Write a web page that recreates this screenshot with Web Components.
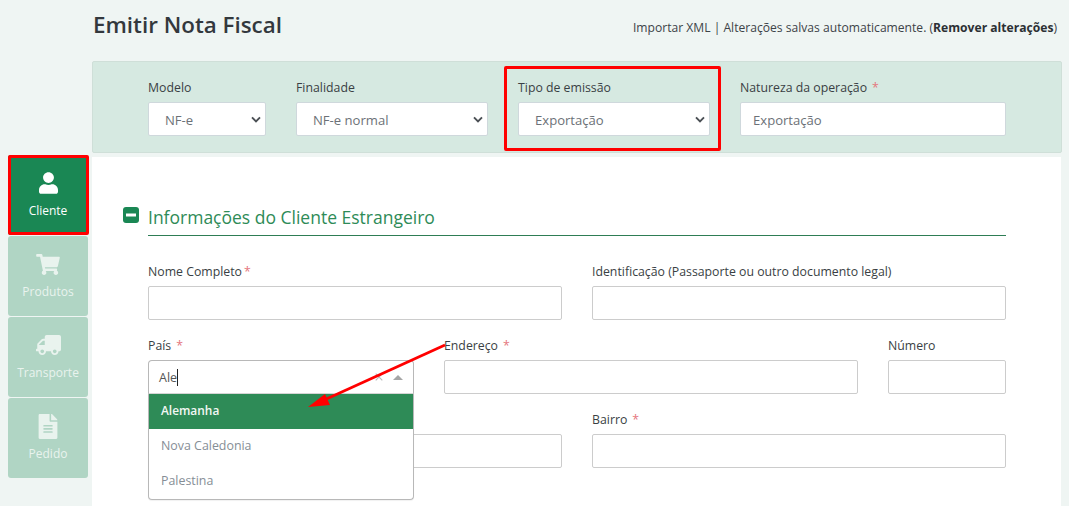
<!DOCTYPE html>
<html lang="pt-BR">
<head>
<meta charset="utf-8">
<title>Emitir Nota Fiscal</title>
<style>
  html, body { margin: 0; height: 506px; overflow: hidden; background: #eff5f3; }
  body { font-family: "Open Sans", "Noto Sans", sans-serif; font-size: 13px; color: #333; }
</style>
</head>
<body>
<nfe-app></nfe-app>

<script>
// Form field: label + a box (input look, select look, or whatever is slotted)
class NfeField extends HTMLElement {
  constructor() {
    super();
    let shadow = this.attachShadow({mode: 'open'});
    let req = this.hasAttribute('required');
    let gap = this.getAttribute('gap') || '5px';
    let value = this.getAttribute('value') || '';
    let isSelect = this.getAttribute('type') === 'select';
    let chevron = isSelect ?
      '<svg class="chev" width="10" height="7" viewBox="0 0 10 7"><path d="M1 1.4 5 5.4l4-4" fill="none" stroke="#4a4f54" stroke-width="1.9"/></svg>' : '';
    shadow.innerHTML =
    '<style>\
      :host { display: block; width: var(--w, 100%); position: relative; flex: none; }\
      .lbl { display: block; height: 24px; line-height: 20px; font-size: 12.3px; color: #3a3f44; white-space: nowrap; }\
      .req { color: #e5767d; margin-left: ' + gap + '; }\
      .box { box-sizing: border-box; height: 34px; background: #fff; border: 1px solid #ccc; border-radius: 2px;\
             display: flex; align-items: center; justify-content: space-between;\
             padding: 1px 4px 0 ' + (isSelect ? '16px' : '12px') + '; font-size: 13.1px; color: #6c7177; }\
      :host([tone="bar"]) .box { border-color: #cfd8dc; }\
      :host([marked]) .mark { position: absolute; left: -14px; right: -11px; top: -12px; bottom: -15px;\
             border: 3px solid #f00; border-radius: 2px; pointer-events: none; }\
    </style>\
    <span class="lbl">' + this.getAttribute('label') + (req ? '<span class="req">*</span>' : '') + '</span>\
    <slot><div class="box"><span>' + value + '</span>' + chevron + '</div></slot>\
    <div class="mark"></div>';
  }
}
customElements.define('nfe-field', NfeField);

// Autocomplete for the country, open with the options over the next row
class NfeCombo extends HTMLElement {
  constructor() {
    super();
    let shadow = this.attachShadow({mode: 'open'});
    shadow.innerHTML =
    '<style>\
      :host { display: block; position: relative; height: 34px; font-size: 12.4px; }\
      .box { box-sizing: border-box; height: 34px; background: #fff; border: 1px solid #b8b8b8; border-bottom-color: #d5d5d5;\
             border-radius: 4px 4px 0 0; display: flex; align-items: center; padding: 0 10px 0 10px; color: #555; }\
      .val { flex: 1; font-size: 12.5px; }\
      .cursor { display: inline-block; width: 1px; height: 17px; background: #222; vertical-align: -4px; }\
      .x { margin-right: 10px; }\
      .list { position: absolute; z-index: 2; top: 34px; left: 0; right: 0; box-sizing: border-box; background: #fff;\
              border: 1px solid #b8b8b8; border-top: 0; border-radius: 0 0 4px 4px; box-shadow: 0 1px 1px rgba(0,0,0,.06); }\
      .opt { height: 35px; line-height: 33px; padding-left: 12px; color: #868e96; }\
      .opt.on { background: #2e8b57; color: #f2f7f4; font-weight: 600; font-size: 11.9px; }\
    </style>\
    <div class="box">\
      <span class="val">Ale<span class="cursor"></span></span>\
      <svg class="x" width="8" height="8" viewBox="0 0 8 8"><path d="M.7.7l6.6 6.6M7.3.7.7 7.3" stroke="#bbb" stroke-width="1.2"/></svg>\
      <svg width="10" height="5" viewBox="0 0 10 5"><path d="M5 0l5 5H0z" fill="#a6a6a6"/></svg>\
    </div>\
    <div class="list">\
      <div class="opt on">Alemanha</div>\
      <div class="opt">Nova Caledonia</div>\
      <div class="opt">Palestina</div>\
    </div>';
  }
}
customElements.define('nfe-combo', NfeCombo);

// Side menu tile: slotted svg icon + text
class NfeTile extends HTMLElement {
  constructor() {
    super();
    let shadow = this.attachShadow({mode: 'open'});
    shadow.innerHTML =
    '<style>\
      :host { display: flex; flex-direction: column; align-items: center; box-sizing: border-box; position: relative;\
              width: 80px; height: 80px; border-radius: 3px; background: #b0d5c4; color: #e9f3ee; font-size: 12px; }\
      :host([active]) { background: #1a8754; color: #fff; }\
      .icon { height: 30px; margin-top: 13px; display: flex; align-items: center; justify-content: center; }\
      .txt { margin-top: 4px; line-height: 18px; }\
      :host([active]) .mark { position: absolute; left: 0; right: -1px; top: 0; bottom: 0;\
              border: 3px solid #f00; border-radius: 2px; }\
    </style>\
    <div class="icon"><slot name="icon"></slot></div>\
    <div class="txt"><slot></slot></div>\
    <div class="mark"></div>';
  }
}
customElements.define('nfe-tile', NfeTile);

// Page: side menu, header line, top bar and the client card
class NfeApp extends HTMLElement {
  constructor() {
    super();
    let shadow = this.attachShadow({mode: 'open'});
    shadow.innerHTML =
    '<style>\
      :host { display: flex; position: relative; width: 1069px; height: 506px; overflow: hidden; }\
      nav { width: 80px; padding: 155px 4px 0 8px; display: flex; flex-direction: column; gap: 1px; flex: none; }\
      main { width: 970px; flex: none; }\
      header { height: 61px; display: flex; justify-content: space-between; align-items: center; box-sizing: border-box; padding: 0 5px 12px 1px; }\
      h1 { margin: 0; font-size: 22.4px; font-weight: 600; color: #33383d; line-height: 30px; }\
      .tools { font-size: 12.12px; color: #3d4348; padding-top: 6px; }\
      .tools b { color: #2c3034; }\
      .bar { box-sizing: border-box; height: 92px; background: #d6e9e1; border: 1px solid #cfdfd8; border-radius: 2px;\
             padding: 16px 0 0 55px; display: flex; align-items: flex-start; gap: 30px; }\
      .card { width: 969px; height: 360px; margin-top: 4px; background: #fff; box-sizing: border-box; padding: 48px 55px 0 56px; position: relative; }\
      h2 { margin: 0 0 26px; height: 30px; line-height: 24px; font-size: 17.5px; font-weight: 500; color: #2e8b57; border-bottom: 1px solid #2e7d55; position: relative; }\
      h2 svg { position: absolute; left: -25px; top: 2px; }\
      .row { display: flex; gap: 30px; margin-bottom: 16px; }\
      .arrow { position: absolute; left: 0; top: 0; z-index: 5; pointer-events: none; }\
    </style>\
    <nav>\
      <nfe-tile active><svg slot="icon" width="19" height="22" viewBox="0 0 448 512"><path fill="#fff" d="M224 256c70.7 0 128-57.3 128-128S294.7 0 224 0 96 57.3 96 128s57.3 128 128 128zm89.6 32h-16.7c-22.2 10.2-46.9 16-72.9 16s-50.6-5.8-72.9-16h-16.7C60.2 288 0 348.2 0 422.4V464c0 26.5 21.5 48 48 48h352c26.5 0 48-21.5 48-48v-41.6c0-74.2-60.2-134.4-134.4-134.4z"/></svg>Cliente</nfe-tile>\
      <nfe-tile><svg slot="icon" width="24" height="21" viewBox="0 0 576 512"><path fill="#e9f3ee" d="M528.12 301.319l47.273-208C578.806 78.301 567.391 64 551.99 64H159.208l-9.166-44.81C147.758 8.021 137.93 0 126.529 0H24C10.745 0 0 10.745 0 24v16c0 13.255 10.745 24 24 24h69.883l70.248 343.435C147.325 417.1 136 435.222 136 456c0 30.928 25.072 56 56 56s56-25.072 56-56c0-15.674-6.447-29.835-16.824-40h209.647C430.447 426.165 424 440.326 424 456c0 30.928 25.072 56 56 56s56-25.072 56-56c0-22.172-12.888-41.332-31.579-50.405l5.517-24.276c3.413-15.018-8.002-29.319-23.403-29.319H218.117l-6.545-32h293.145c11.206 0 20.92-7.754 23.403-18.681z"/></svg>Produtos</nfe-tile>\
      <nfe-tile><svg slot="icon" width="25" height="20" viewBox="0 0 640 512"><path fill="#e9f3ee" transform="matrix(-1 0 0 1 640 0)" d="M624 352h-16V243.9c0-12.7-5.1-24.9-14.1-33.9L494 110.1c-9-9-21.2-14.1-33.9-14.1H416V48c0-26.5-21.5-48-48-48H48C21.5 0 0 21.5 0 48v320c0 26.5 21.5 48 48 48h16c0 53 43 96 96 96s96-43 96-96h128c0 53 43 96 96 96s96-43 96-96h48c8.8 0 16-7.2 16-16v-32c0-8.8-7.2-16-16-16zM160 464c-26.5 0-48-21.5-48-48s21.5-48 48-48 48 21.5 48 48-21.5 48-48 48zm320 0c-26.5 0-48-21.5-48-48s21.5-48 48-48 48 21.5 48 48-21.5 48-48 48zm80-208H416V144h44.1l99.9 99.9V256z"/></svg>Transporte</nfe-tile>\
      <nfe-tile><svg slot="icon" width="22" height="25" viewBox="0 0 384 512"><path fill="#e9f3ee" d="M224 136V0H24C10.7 0 0 10.7 0 24v464c0 13.3 10.7 24 24 24h336c13.3 0 24-10.7 24-24V160H248c-13.2 0-24-10.8-24-24zm64 236c0 6.6-5.4 12-12 12H108c-6.6 0-12-5.4-12-12v-8c0-6.6 5.4-12 12-12h168c6.6 0 12 5.4 12 12v8zm0-64c0 6.6-5.4 12-12 12H108c-6.6 0-12-5.4-12-12v-8c0-6.6 5.4-12 12-12h168c6.6 0 12 5.4 12 12v8zm0-72v8c0 6.6-5.4 12-12 12H108c-6.6 0-12-5.4-12-12v-8c0-6.6 5.4-12 12-12h168c6.6 0 12 5.4 12 12zm96-114.1v6.1H256V0h6.1c6.4 0 12.5 2.5 17 7l97.9 98c4.5 4.5 7 10.6 7 16.9z"/></svg>Pedido</nfe-tile>\
    </nav>\
    <main>\
      <header>\
        <h1>Emitir Nota Fiscal</h1>\
        <div class="tools">Importar XML | Alterações salvas automaticamente. (<b>Remover alterações</b>)</div>\
      </header>\
      <div class="bar">\
        <nfe-field style="--w:118px" tone="bar" type="select" label="Modelo" value="NF-e"></nfe-field>\
        <nfe-field style="--w:192px" tone="bar" type="select" label="Finalidade" value="NF-e normal"></nfe-field>\
        <nfe-field style="--w:192px" tone="bar" type="select" label="Tipo de emissão" value="Exportação" marked></nfe-field>\
        <nfe-field style="--w:266px" tone="bar" label="Natureza da operação" value="Exportação" required></nfe-field>\
      </div>\
      <section class="card">\
        <h2><svg width="16" height="16" viewBox="0 0 16 16"><rect width="16" height="16" rx="3" fill="#1a8754"/><rect x="3" y="6.5" width="10" height="3" fill="#fff"/></svg>Informações do Cliente Estrangeiro</h2>\
        <div class="row">\
          <nfe-field style="--w:414px" label="Nome Completo" gap="2px" required></nfe-field>\
          <nfe-field style="--w:414px" label="Identificação (Passaporte ou outro documento legal)"></nfe-field>\
        </div>\
        <div class="row">\
          <nfe-field style="--w:266px;z-index:2" label="País" required><nfe-combo></nfe-combo></nfe-field>\
          <nfe-field style="--w:414px" label="Endereço" required></nfe-field>\
          <nfe-field style="--w:118px" label="Número"></nfe-field>\
        </div>\
        <div class="row">\
          <nfe-field style="--w:414px" label=""></nfe-field>\
          <nfe-field style="--w:414px" label="Bairro" required></nfe-field>\
        </div>\
      </section>\
    </main>\
    <svg class="arrow" width="1069" height="506" viewBox="0 0 1069 506">\
      <path d="M445 345 322 401" stroke="#f00" stroke-width="2.8" fill="none"/>\
      <path d="M308 407 325 394 330 405z" fill="#f00"/>\
    </svg>';
  }
}
customElements.define('nfe-app', NfeApp);
</script>
</body>
</html>
